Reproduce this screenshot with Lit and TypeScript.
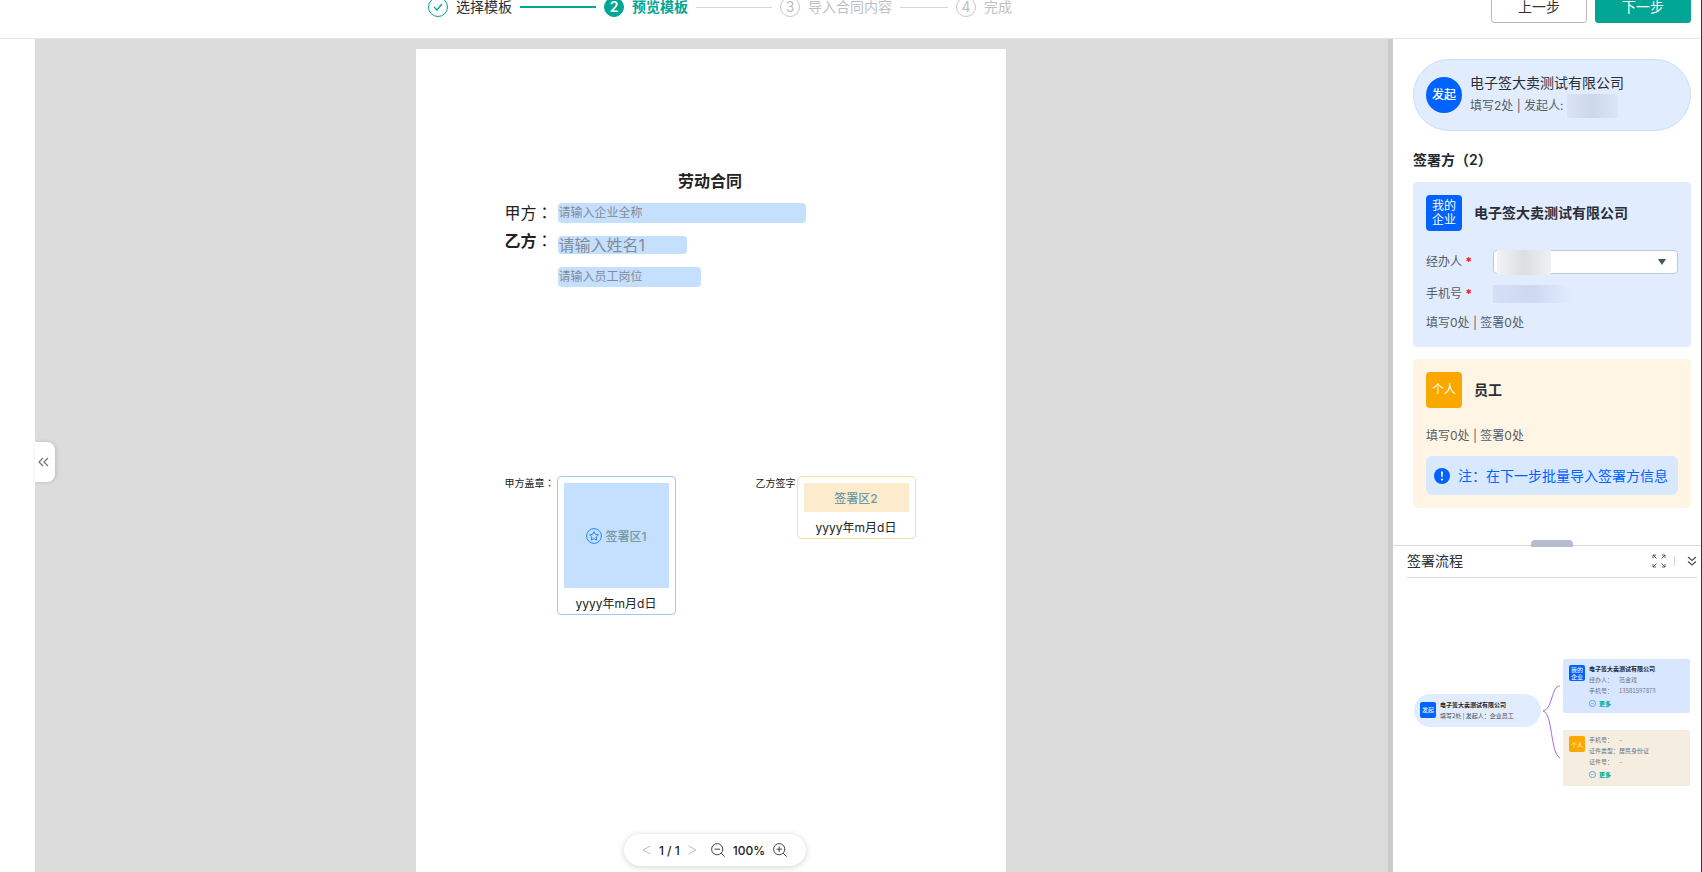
import { LitElement, html, css, svg, nothing } from "lit";
import { customElement, property, state } from "lit/decorators.js";
import { classMap } from "lit/directives/class-map.js";

const base = css`
  * {
    box-sizing: border-box;
  }
  p,
  h1,
  h2,
  h3,
  ol,
  ul,
  dl,
  dd {
    margin: 0;
    padding: 0;
    font-size: inherit;
    font-weight: inherit;
  }
  button,
  input,
  select {
    font: inherit;
    color: inherit;
    margin: 0;
  }
  button {
    display: flex;
    align-items: center;
    justify-content: center;
    padding: 0;
    border: 0;
    background: none;
    cursor: pointer;
  }
  svg {
    display: block;
    fill: none;
    stroke: currentColor;
  }
`;

type StepState = "done" | "current" | "todo";

@customElement("step-bar")
export class StepBar extends LitElement {
  @state() private steps: { label: string; state: StepState }[] = [
    { label: "选择模板", state: "done" },
    { label: "预览模板", state: "current" },
    { label: "导入合同内容", state: "todo" },
    { label: "完成", state: "todo" },
  ];

  static styles = [
    base,
    css`
      ol {
        display: flex;
        list-style: none;
      }
      .step {
        display: flex;
        align-items: center;
        gap: 8px;
        width: 176px;
        padding-right: 8px;
        font-size: 14px;
        line-height: 14px;
        white-space: nowrap;
        color: #bfbfbf;
      }
      .step:last-child {
        width: auto;
        padding-right: 0;
      }
      .dot {
        display: flex;
        align-items: center;
        justify-content: center;
        width: 20px;
        height: 20px;
        border: 1px solid #c8c8c8;
        border-radius: 50%;
      }
      .line {
        flex: 1;
        height: 1px;
        background: #d8d8d8;
      }
      .done {
        color: #2b2b33;
      }
      .done .dot {
        color: #00a693;
        border-color: #00a693;
      }
      .done .line {
        height: 2px;
        background: #00a693;
      }
      .current {
        color: #00a693;
        font-weight: 600;
      }
      .current .dot {
        color: #fff;
        background: #00a693;
        border-color: #00a693;
      }
    `,
  ];

  render() {
    return html`<ol>
      ${this.steps.map(
        (s, i) => html`<li class=${classMap({ step: true, [s.state]: true })}>
          <span class="dot"
            >${s.state === "done"
              ? html`<svg width="12" height="12" viewBox="0 0 12 12" stroke-width="1.2">
                  <path d="M2 6l3 3 5-6" />
                </svg>`
              : i + 1}</span
          >
          <span>${s.label}</span>
          ${i < this.steps.length - 1 ? html`<span class="line"></span>` : nothing}
        </li>`
      )}
    </ol>`;
  }
}

@customElement("contract-page")
export class ContractPage extends LitElement {
  static styles = [
    base,
    css`
      :host {
        display: block;
        width: 590px;
        background: #fff;
        padding: 120px 90px 0 89px;
        color: #222;
      }
      h1 {
        text-align: center;
        font-size: 16px;
        line-height: 24px;
        font-weight: 700;
      }
      .fields {
        display: grid;
        grid-template-columns: 53px 1fr;
        margin-top: 4px;
        align-items: center;
        grid-auto-rows: 32px;
        font-size: 16px;
        line-height: 24px;
      }
      .fields label {
        white-space: nowrap;
      }
      .fields .raised {
        align-self: start;
      }
      .colon {
        font-family: "Noto Sans CJK TC", sans-serif;
        line-height: 1;
      }
      .strong {
        font-weight: 600;
      }
      input {
        grid-column: 2;
        height: 20px;
        padding: 0 1px;
        border: 0;
        border-radius: 4px;
        background: #c5dfff;
        font-size: 12px;
      }
      input::placeholder {
        color: #838c96;
        opacity: 1;
      }
      .company {
        width: 248px;
      }
      .name {
        width: 129px;
        height: 18px;
        font-size: 16px;
      }
      .job {
        width: 143px;
      }
      .signs {
        display: grid;
        grid-template-columns: 52px 119px 1fr 41px 119px;
        margin-top: 183px;
        align-items: start;
      }
      .caption {
        font-size: 10px;
        line-height: 14px;
        white-space: nowrap;
      }
      .second {
        grid-column: 4;
      }
      .zone {
        padding: 6px 6px 0;
        border: 1px solid #9cc8fb;
        border-radius: 4px;
        background: #fff;
        font-size: 12px;
        text-align: center;
      }
      .zone.person {
        border-color: #fadf9f;
      }
      .area {
        display: flex;
        align-items: center;
        justify-content: center;
        gap: 4px;
        height: 105px;
        background: #c5dfff;
        color: #6f99a3;
        font-weight: 500;
      }
      .area svg {
        color: #2684ff;
      }
      .person .area {
        height: 29px;
        background: #fdebcd;
      }
      .date {
        padding: 7px 0 1px;
        line-height: 18px;
      }
    `,
  ];

  render() {
    return html`
      <h1>劳动合同</h1>
      <div class="fields">
        <label for="company">甲方<span class="colon">：</span></label>
        <input id="company" class="company" placeholder="请输入企业全称" />
        <label for="name" class="raised"><span class="strong">乙方</span><span class="colon">：</span></label>
        <input id="name" class="name" placeholder="请输入姓名1" />
        <input id="job" class="job" aria-label="员工岗位" placeholder="请输入员工岗位" />
      </div>
      <div class="signs">
        <span class="caption">甲方盖章<span class="colon">：</span></span>
        <div class="zone">
          <div class="area">
            <svg width="16" height="16" viewBox="0 0 16 16" stroke-width="1">
              <circle cx="8" cy="8" r="7.4" />
              <path
                d="M8 3.6l1.4 2.8 3 .45-2.2 2.15.5 3.1L8 10.6l-2.7 1.5.5-3.1-2.2-2.15 3-.45z"
                stroke-linejoin="round"
              />
            </svg>
            <span>签署区1</span>
          </div>
          <p class="date">yyyy年m月d日</p>
        </div>
        <span class="caption second">乙方签字</span>
        <div class="zone person">
          <div class="area">签署区2</div>
          <p class="date">yyyy年m月d日</p>
        </div>
      </div>
    `;
  }
}

@customElement("signer-panel")
export class SignerPanel extends LitElement {
  static styles = [
    base,
    css`
      :host {
        display: block;
        padding: 20px 10px 37px 20px;
        font-size: 12px;
        line-height: 18px;
        color: #565b66;
      }
      .starter {
        display: flex;
        align-items: center;
        gap: 8px;
        height: 72px;
        padding: 0 12px;
        border: 1px solid #c9defb;
        border-radius: 36px;
        background: #e1edff;
      }
      .badge {
        display: flex;
        align-items: center;
        justify-content: center;
        flex: none;
        width: 36px;
        height: 36px;
        border-radius: 4px;
        background: #0062ff;
        color: #fff;
        line-height: 14px;
        text-align: center;
      }
      .round {
        border-radius: 50%;
        font-weight: 500;
      }
      .orange {
        background: #faa700;
      }
      .title {
        font-size: 14px;
        line-height: 22px;
        color: #2a2e36;
      }
      .bold {
        font-weight: 600;
      }
      .by {
        display: flex;
        align-items: center;
        height: 24px;
        white-space: nowrap;
      }
      .mask {
        background: linear-gradient(90deg, #d9e3f4, #ccd7e9 50%, #dbe6f8);
      }
      .mask-starter {
        width: 51px;
        height: 24px;
      }
      h2 {
        margin: 18px 0 11px;
        font-size: 14px;
        line-height: 22px;
        font-weight: 600;
        color: #22262e;
      }
      .card {
        padding: 13px 13px 15px;
        border-radius: 4px;
        background: #e1edff;
      }
      .card.person {
        margin-top: 12px;
        padding-bottom: 13px;
        background: #fff5e5;
      }
      .head {
        display: flex;
        align-items: center;
        gap: 12px;
      }
      .row {
        display: grid;
        grid-template-columns: 67px 1fr;
        align-items: center;
        margin-top: 11px;
      }
      .row.first {
        margin-top: 19px;
      }
      .required {
        color: #f00;
        font-weight: 600;
      }
      .select {
        position: relative;
        height: 24px;
      }
      select {
        appearance: none;
        display: block;
        width: 100%;
        height: 24px;
        border: 1px solid #bfcbd4;
        border-radius: 4px;
        background: #fff;
      }
      .mask-name {
        position: absolute;
        left: 4px;
        top: 0;
        width: 54px;
        height: 25px;
        background: linear-gradient(90deg, #f2f3f4, #dcdedf 50%, #eff0f2);
        pointer-events: none;
      }
      .arrow {
        position: absolute;
        right: 12px;
        top: 9px;
        fill: #3f5a57;
        stroke: none;
        pointer-events: none;
      }
      .mask-phone {
        width: 80px;
        height: 18px;
        background: linear-gradient(90deg, #d3e0f7, #cdd9ef 50%, #e1edff);
      }
      .summary {
        margin-top: 11px;
      }
      .person .summary {
        margin-top: 19px;
      }
      .note {
        display: flex;
        align-items: center;
        gap: 8px;
        height: 39px;
        margin-top: 11px;
        padding: 0 8px;
        border-radius: 6px;
        background: #d8e8ff;
        color: #0062ff;
        font-size: 14px;
        white-space: nowrap;
      }
      .note svg {
        flex: none;
        stroke: none;
      }
    `,
  ];

  render() {
    return html`
      <div class="starter">
        <span class="badge round">发起</span>
        <div>
          <p class="title">电子签大卖测试有限公司</p>
          <p class="by">填写2处 | 发起人:&nbsp;<span class="mask mask-starter"></span></p>
        </div>
      </div>
      <h2>签署方（2）</h2>
      <section class="card">
        <div class="head">
          <span class="badge">我的<br />企业</span>
          <h3 class="title bold">电子签大卖测试有限公司</h3>
        </div>
        <div class="row first">
          <label for="agent">经办人 <span class="required">*</span></label>
          <div class="select">
            <select id="agent">
              <option></option>
            </select>
            <span class="mask-name"></span>
            <svg class="arrow" width="8" height="6" viewBox="0 0 8 6"><path d="M0 0h8L4 6z" /></svg>
          </div>
        </div>
        <div class="row">
          <span>手机号 <span class="required">*</span></span>
          <span class="mask-phone"></span>
        </div>
        <p class="summary">填写0处 | 签署0处</p>
      </section>
      <section class="card person">
        <div class="head">
          <span class="badge orange">个人</span>
          <h3 class="title bold">员工</h3>
        </div>
        <p class="summary">填写0处 | 签署0处</p>
        <p class="note">
          <svg width="16" height="16" viewBox="0 0 16 16">
            <circle cx="8" cy="8" r="8" fill="#0062ff" />
            <path d="M7 3.5h2l-.4 5.5H7.4z" fill="#fff" />
            <circle cx="8" cy="11.6" r="1.1" fill="#fff" />
          </svg>
          <span>注：在下一步批量导入签署方信息</span>
        </p>
      </section>
    `;
  }
}

@customElement("flow-panel")
export class FlowPanel extends LitElement {
  @property({ type: Boolean }) collapsed = false;

  static styles = [
    base,
    css`
      :host {
        display: block;
        position: relative;
        border-top: 1px solid #d5d7da;
        padding: 0 4px 0 14px;
        color: #6f7683;
      }
      .handle {
        position: absolute;
        left: 138px;
        top: -6px;
        width: 42px;
        height: 7px;
        border-radius: 4px 4px 0 0;
        background: #b6bbcf;
      }
      header {
        display: flex;
        align-items: center;
        height: 32px;
        padding-bottom: 2px;
        border-bottom: 1px solid #d5d7da;
      }
      h2 {
        flex: 1;
        font-size: 14px;
        line-height: 22px;
        color: #2a2e36;
      }
      header button {
        color: #4a4f58;
      }
      .sep {
        width: 1px;
        height: 10px;
        margin: 0 12px 0 8px;
        background: #d5d7da;
      }
      .canvas {
        display: flex;
        align-items: flex-start;
        padding: 81px 7px 0 7px;
        font-family: "Noto Sans CJK SC", sans-serif;
        font-size: 6px;
        line-height: 11px;
        white-space: nowrap;
      }
      .start {
        display: flex;
        align-items: center;
        gap: 4px;
        width: 127px;
        height: 33px;
        margin-top: 35px;
        padding: 0 6px 2px;
        border-radius: 17px;
        background: #e1edff;
        color: #4a4f58;
      }
      .badge {
        display: flex;
        align-items: center;
        justify-content: center;
        width: 16px;
        height: 16px;
        border-radius: 2px;
        background: #0062ff;
        color: #fff;
        line-height: 7px;
        text-align: center;
      }
      .orange {
        background: #faa700;
      }
      .name {
        color: #1f232b;
        font-weight: 600;
      }
      .link {
        color: #a06bdc;
      }
      .cards {
        flex: 1;
        display: grid;
        gap: 17px;
      }
      .card {
        display: flex;
        gap: 4px;
        height: 54px;
        padding: 6px;
        border-radius: 2px;
        background: #d8e7ff;
      }
      .card.person {
        height: 56px;
        background: #f5eee0;
      }
      .info {
        margin-top: -2px;
      }
      .pair {
        display: grid;
        grid-template-columns: 30px 1fr;
      }
      .more {
        display: flex;
        align-items: center;
        gap: 3px;
        height: 15px;
        color: #00a693;
        font-weight: 700;
        line-height: 8px;
      }
      .more svg {
        color: #2684ff;
      }
    `,
  ];

  private pair(label: string, value: string) {
    return html`<p class="pair"><span>${label}</span><span>${value}</span></p>`;
  }

  private more() {
    return html`<button class="more">
      <svg width="7" height="7" viewBox="0 0 7 7" stroke-width="0.7">
        <circle cx="3.5" cy="3.5" r="3.1" />
        <path d="M2 3.6h3" stroke-dasharray="0.7 0.4" />
      </svg>
      更多
    </button>`;
  }

  render() {
    const corner = svg`<path d="M1 4V1H4M1 1L4.500 4.500M10 1H13V4M13 1L9.500 4.500M1 10V13H4M1 13L4.500 9.500M13 10V13H10M13 13L9.500 9.500" />`;
    return html`
      <span class="handle"></span>
      <header>
        <h2>签署流程</h2>
        <button aria-label="全屏">
          <svg width="14" height="14" viewBox="0 0 14 14" stroke-width="0.9">${corner}</svg>
        </button>
        <span class="sep"></span>
        <button aria-label="收起" @click=${() => (this.collapsed = !this.collapsed)}>
          <svg width="10" height="10" viewBox="0 0 10 10" stroke-width="1.200">
            <path d="M1 1l4 3.500L9 1M1 5.500L5 9l4-3.500" />
          </svg>
        </button>
      </header>
      ${this.collapsed
        ? nothing
        : html`<div class="canvas">
            <div class="start">
              <span class="badge">发起</span>
              <div>
                <p class="name">电子签大卖测试有限公司</p>
                <p>填写2处 | 发起人：企业员工</p>
              </div>
            </div>
            <svg class="link" width="22" height="127" viewBox="0 0 22 127" stroke-width="1">
              <path d="M2 52C12 50 10 27 19 27M2 52C12 54 9 94 19 99" />
            </svg>
            <div class="cards">
              <div class="card">
                <span class="badge">我的<br />企业</span>
                <div class="info">
                  <p class="name">电子签大卖测试有限公司</p>
                  ${this.pair("经办人：", "范金戏")} ${this.pair("手机号：", "13581597873")} ${this.more()}
                </div>
              </div>
              <div class="card person">
                <span class="badge orange">个人</span>
                <div class="info">
                  ${this.pair("手机号：", "–")} ${this.pair("证件类型：", "居民身份证")}
                  ${this.pair("证件号：", "–")} ${this.more()}
                </div>
              </div>
            </div>
          </div>`}
    `;
  }
}

@customElement("app-root")
export class AppRoot extends LitElement {
  static styles = [
    base,
    css`
      :host {
        display: flex;
        flex-direction: column;
        height: 100vh;
        overflow: hidden;
        box-sizing: border-box;
        border-right: 1px solid #3a3a3c;
        background: #fff;
        font-family: Inter, "Noto Sans CJK SC", sans-serif;
      }
      .top {
        display: flex;
        align-items: center;
        flex: none;
        height: 63px;
        margin-top: -24px;
        padding: 0 10px 0 428px;
        border-bottom: 1px solid #e3e6e6;
      }
      .actions {
        display: flex;
        gap: 8px;
        margin-left: auto;
      }
      .btn {
        width: 96px;
        height: 32px;
        border: 1px solid #b9b9b9;
        border-radius: 3px;
        font-size: 14px;
        line-height: 14px;
        color: #333;
      }
      .primary {
        background: #00a693;
        border-color: #00a693;
        color: #fff;
      }
      .main {
        flex: 1;
        display: grid;
        grid-template-columns: 35px 1fr 308px;
        min-height: 0;
      }
      .stage {
        position: relative;
        display: flex;
        justify-content: center;
        padding: 10px 2px 0 0;
        border-right: 5px solid #cbcbcb;
        background: #dcdcdc;
        min-width: 0;
      }
      .fold {
        position: absolute;
        left: 0;
        top: 403px;
        width: 20px;
        height: 40px;
        padding-right: 4px;
        border-radius: 0 8px 8px 0;
        background: #fff;
        color: #777;
        box-shadow: 1px 0 4px rgba(0, 0, 0, 0.15);
      }
      .zoom {
        position: absolute;
        left: 50%;
        bottom: 6px;
        margin-left: -88px;
        display: flex;
        align-items: center;
        justify-content: center;
        gap: 8px;
        width: 182px;
        height: 32px;
        border-radius: 16px;
        background: #fff;
        box-shadow: 0 1px 6px rgba(0, 0, 0, 0.18);
        font-size: 12px;
        font-weight: 500;
        color: #222;
        white-space: nowrap;
      }
      .zoom .pages {
        display: flex;
        align-items: center;
        gap: 8px;
        margin-right: 6px;
      }
      .muted {
        color: #bbb;
      }
      .tool {
        color: #444;
      }
      aside {
        min-width: 0;
        background: #fff;
      }
    `,
  ];

  render() {
    return html`
      <header class="top">
        <step-bar></step-bar>
        <div class="actions">
          <button class="btn">上一步</button>
          <button class="btn primary">下一步</button>
        </div>
      </header>
      <div class="main">
        <div></div>
        <main class="stage">
          <button class="fold" aria-label="展开">
            <svg width="11" height="10" viewBox="0 0 11 10" stroke-width="1.300">
              <path d="M5 1L1 5l4 4M10 1L6 5l4 4" />
            </svg>
          </button>
          <contract-page></contract-page>
          <div class="zoom">
            <span class="pages">
              <button class="muted" aria-label="上一页">
                <svg width="9" height="10" viewBox="0 0 9 10"><path d="M8.500 1L1 5l7.500 4" /></svg>
              </button>
              <span>1 / 1</span>
              <button class="muted" aria-label="下一页">
                <svg width="9" height="10" viewBox="0 0 9 10"><path d="M.5 1L8 5L.5 9" /></svg>
              </button>
            </span>
            <button class="tool" aria-label="缩小">
              <svg width="14" height="14" viewBox="0 0 14 14">
                <circle cx="6.200" cy="6.200" r="5.600" />
                <path d="M10.200 10.200L13.600 13.600M3.500 6.200H9" />
              </svg>
            </button>
            <span>100%</span>
            <button class="tool" aria-label="放大">
              <svg width="14" height="14" viewBox="0 0 14 14">
                <circle cx="6.200" cy="6.200" r="5.600" />
                <path d="M10.200 10.200L13.600 13.600M3.500 6.200H9M6.200 3.500V9" />
              </svg>
            </button>
          </div>
        </main>
        <aside>
          <signer-panel></signer-panel>
          <flow-panel></flow-panel>
        </aside>
      </div>
    `;
  }
}
